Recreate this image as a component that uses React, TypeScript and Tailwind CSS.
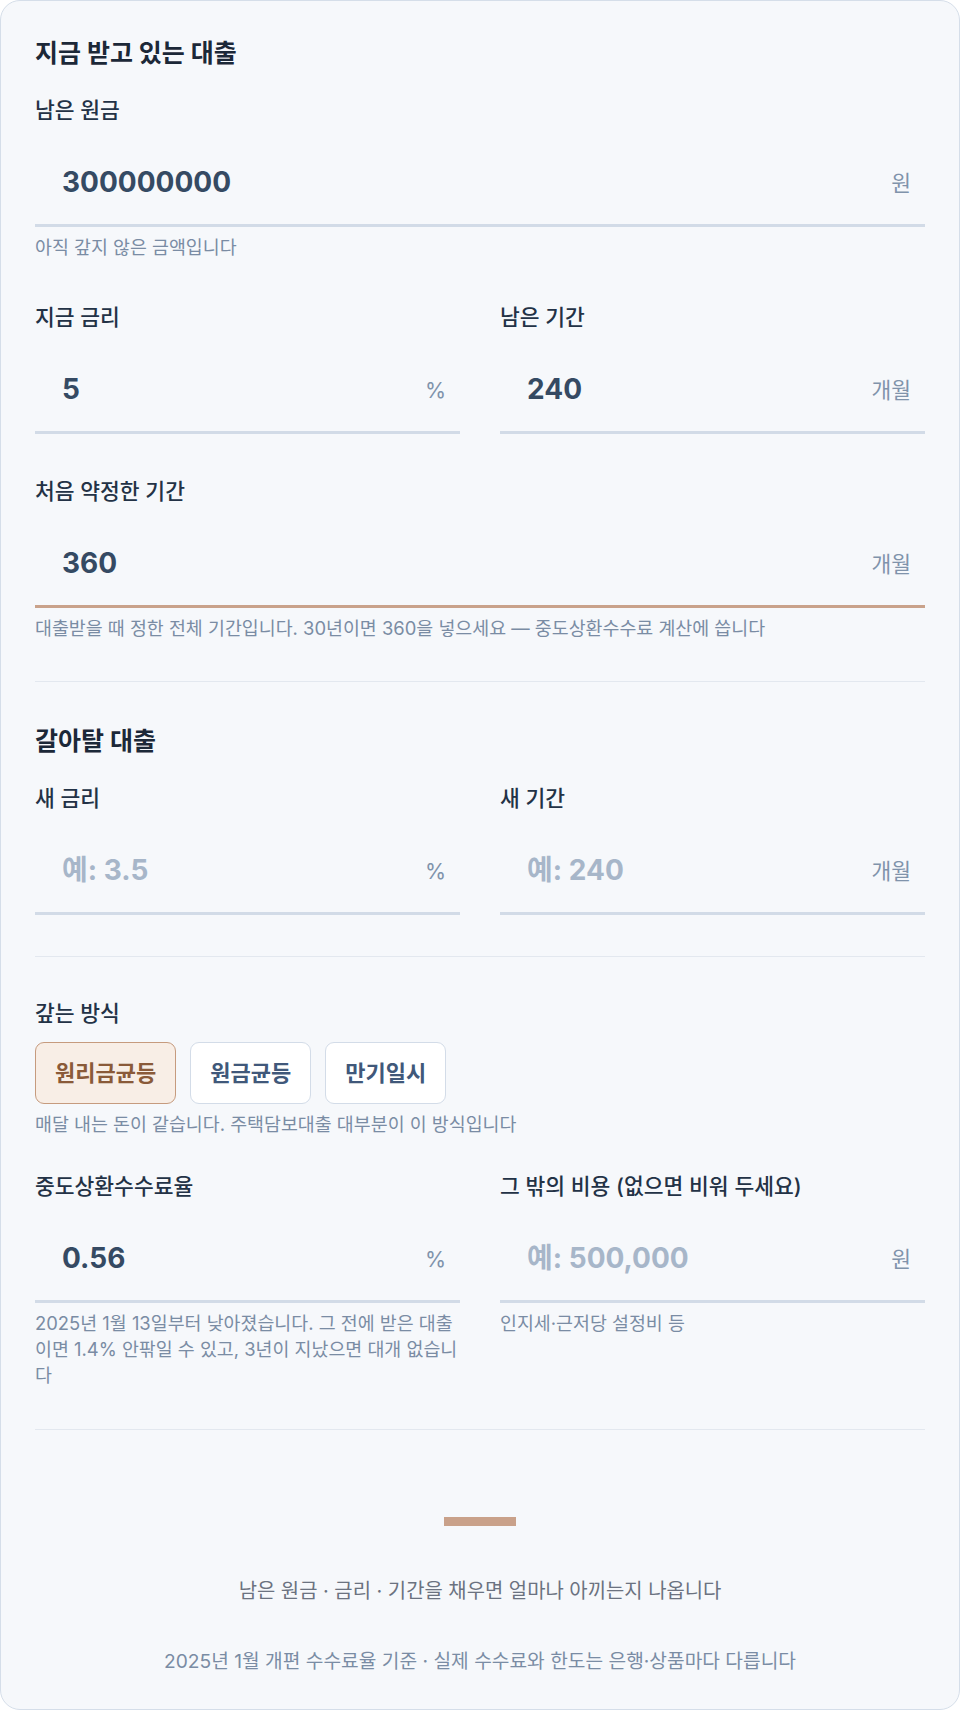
import React from "react";

const FONT = { fontFamily: '"Inter", "Noto Sans CJK KR", sans-serif' };

function Label({ children }: { children: React.ReactNode }) {
  return (
    <div className="text-[21.5px] leading-[28px] font-medium text-[#233246] mb-[15px]">
      {children}
    </div>
  );
}

function Helper({ children }: { children: React.ReactNode }) {
  return (
    <div className="mt-[7px] text-[18.4px] leading-[26px] text-[#7a8ca4]">{children}</div>
  );
}

function Field({
  label,
  value,
  placeholder,
  suffix,
  helper,
  focused,
}: {
  label: string;
  value?: string;
  placeholder?: string;
  suffix: string;
  helper?: string;
  focused?: boolean;
}) {
  return (
    <div className="flex flex-col">
      <Label>{label}</Label>
      <div
        className={
          "h-[88px] flex items-center pl-[27px] pr-[14px] border-b-[3px] " +
          (focused ? "border-[#c9a28b]" : "border-[#d2dbe7]")
        }
      >
        <div
          className={
            "flex-1 text-[28px] font-bold leading-none " +
            (value ? "text-[#354a63]" : "text-[#a7b6c9]")
          }
        >
          {value ?? placeholder}
        </div>
        <div className="text-[21.5px] text-[#8093ab] leading-none pt-[4px]">{suffix}</div>
      </div>
      {helper && <Helper>{helper}</Helper>}
    </div>
  );
}

function Divider({ top, bottom }: { top: string; bottom: string }) {
  return <div className={"h-px bg-[#e3e8ef] " + top + " " + bottom} />;
}

export default function App() {
  return (
    <div style={FONT} className="w-[960px] bg-white">
      <div className="rounded-[20px] border border-[#d5dee9] bg-[#f6f8fb] px-[34px] pt-[36px] pb-[34px]">
        <div className="text-[25px] leading-[32px] font-bold text-[#1c2838] mb-[27px]">
          지금 받고 있는 대출
        </div>
        <div className="flex flex-col gap-[43px]">
          <Field label="남은 원금" value="300000000" suffix="원" helper="아직 갚지 않은 금액입니다" />
          <div className="grid grid-cols-2 gap-x-10">
            <Field label="지금 금리" value="5" suffix="%" />
            <Field label="남은 기간" value="240" suffix="개월" />
          </div>
          <Field
            label="처음 약정한 기간"
            value="360"
            suffix="개월"
            focused
            helper="대출받을 때 정한 전체 기간입니다. 30년이면 360을 넣으세요 — 중도상환수수료 계산에 씁니다"
          />
        </div>

        <Divider top="mt-[40px]" bottom="mb-[43px]" />

        <div className="text-[25px] leading-[32px] font-bold text-[#1c2838] mb-[27px]">
          갈아탈 대출
        </div>
        <div className="grid grid-cols-2 gap-x-10">
          <Field label="새 금리" placeholder="예: 3.5" suffix="%" />
          <Field label="새 기간" placeholder="예: 240" suffix="개월" />
        </div>

        <Divider top="mt-[41px]" bottom="mb-[42px]" />

        <div className="flex flex-col">
          <Label>갚는 방식</Label>
          <div className="flex gap-[14px]">
            <button className="h-[62px] px-[19px] rounded-[9px] border-[1.5px] border-[#c69b7e] bg-[#f8eee6] text-[22px] font-semibold text-[#8a5a39]">
              원리금균등
            </button>
            <button className="h-[62px] px-[19px] rounded-[9px] border-[1.5px] border-[#d3dce8] bg-white text-[22px] font-semibold text-[#40587a]">
              원금균등
            </button>
            <button className="h-[62px] px-[19px] rounded-[9px] border-[1.5px] border-[#d3dce8] bg-white text-[22px] font-semibold text-[#40587a]">
              만기일시
            </button>
          </div>
          <Helper>매달 내는 돈이 같습니다. 주택담보대출 대부분이 이 방식입니다</Helper>
        </div>

        <div className="grid grid-cols-2 gap-x-10 mt-[35px]">
          <Field
            label="중도상환수수료율"
            value="0.56"
            suffix="%"
            helper="2025년 1월 13일부터 낮아졌습니다. 그 전에 받은 대출이면 1.4% 안팎일 수 있고, 3년이 지났으면 대개 없습니다"
          />
          <Field
            label="그 밖의 비용 (없으면 비워 두세요)"
            placeholder="예: 500,000"
            suffix="원"
            helper="인지세·근저당 설정비 등"
          />
        </div>

        <Divider top="mt-[41px]" bottom="mb-0" />

        <div className="flex flex-col items-center">
          <div className="mt-[87px] w-[72px] h-[9px] bg-[#c9a18a]" />
          <div className="mt-[52px] text-[19.9px] leading-[27px] text-[#6b7280]">
            남은 원금 · 금리 · 기간을 채우면 얼마나 아끼는지 나옵니다
          </div>
          <div className="mt-[43px] text-[19.2px] leading-[27px] text-[#7a8ca4]">
            2025년 1월 개편 수수료율 기준 · 실제 수수료와 한도는 은행·상품마다 다릅니다
          </div>
        </div>
      </div>
    </div>
  );
}
